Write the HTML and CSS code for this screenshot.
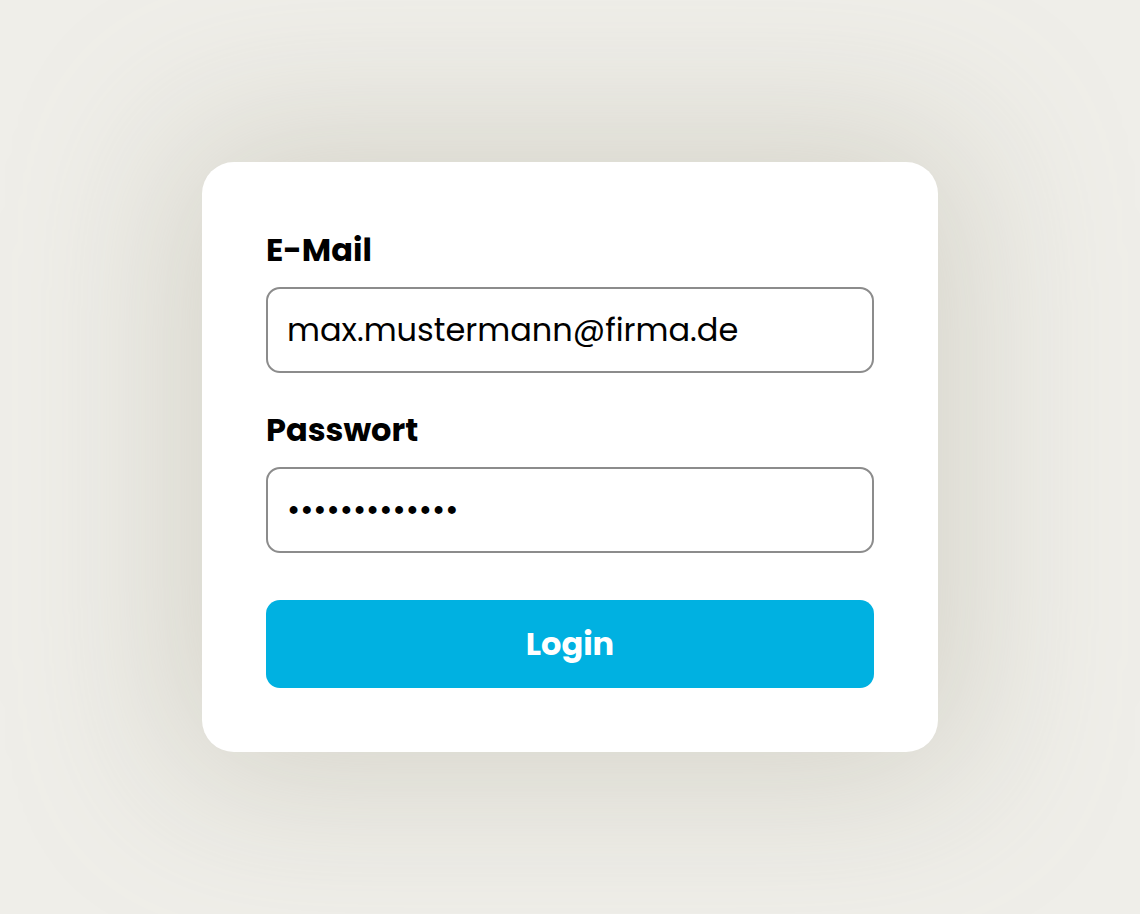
FILE: index.html
```html
<!DOCTYPE html>
<html lang="de">
<head>
<meta charset="utf-8">
<title>Login</title>
<link rel="stylesheet" href="styles.css">
</head>
<body>
<main class="stage">
  <form class="card">
    <div class="field">
      <label class="label" for="email">E-Mail</label>
      <input class="input" id="email" type="text" value="max.mustermann@firma.de">
    </div>
    <div class="field field-gap">
      <label class="label" for="pw">Passwort</label>
      <input class="input input-pw" id="pw" type="password" value="geheim1234567">
    </div>
    <button class="btn" type="button">Login</button>
  </form>
</main>
</body>
</html>
```
FILE: styles.css
```css
html, body {
  margin: 0;
  padding: 0;
  height: 100%;
}
body {
  background: #efeee9;
  font-family: "Poppins", "Inter", "Noto Sans", sans-serif;
  color: #000;
}
.stage {
  height: 914px;
  display: flex;
  align-items: flex-start;
  justify-content: center;
  padding-top: 162px;
  box-sizing: border-box;
}
.card {
  width: 736px;
  box-sizing: border-box;
  background: #fff;
  border-radius: 32px;
  padding: 64px;
  box-shadow: 0 0 160px 30px rgba(170, 165, 145, 0.35);
  display: flex;
  flex-direction: column;
}
.field {
  display: flex;
  flex-direction: column;
}
.field-gap {
  margin-top: 33px;
}
.label {
  font-size: 32px;
  font-weight: 700;
  line-height: 48px;
  margin-bottom: 13px;
}
.input {
  height: 86px;
  box-sizing: border-box;
  border: 2px solid #8c8c8c;
  border-radius: 14px;
  padding: 0 19px;
  font-family: inherit;
  font-size: 32px;
  color: #000;
  background: #fff;
  outline: none;
}
.btn {
  margin-top: 47px;
  height: 88px;
  border: none;
  border-radius: 14px;
  background: #00b1e1;
  color: #fff;
  font-family: inherit;
  font-size: 32px;
  font-weight: 700;
  cursor: pointer;
}
```
